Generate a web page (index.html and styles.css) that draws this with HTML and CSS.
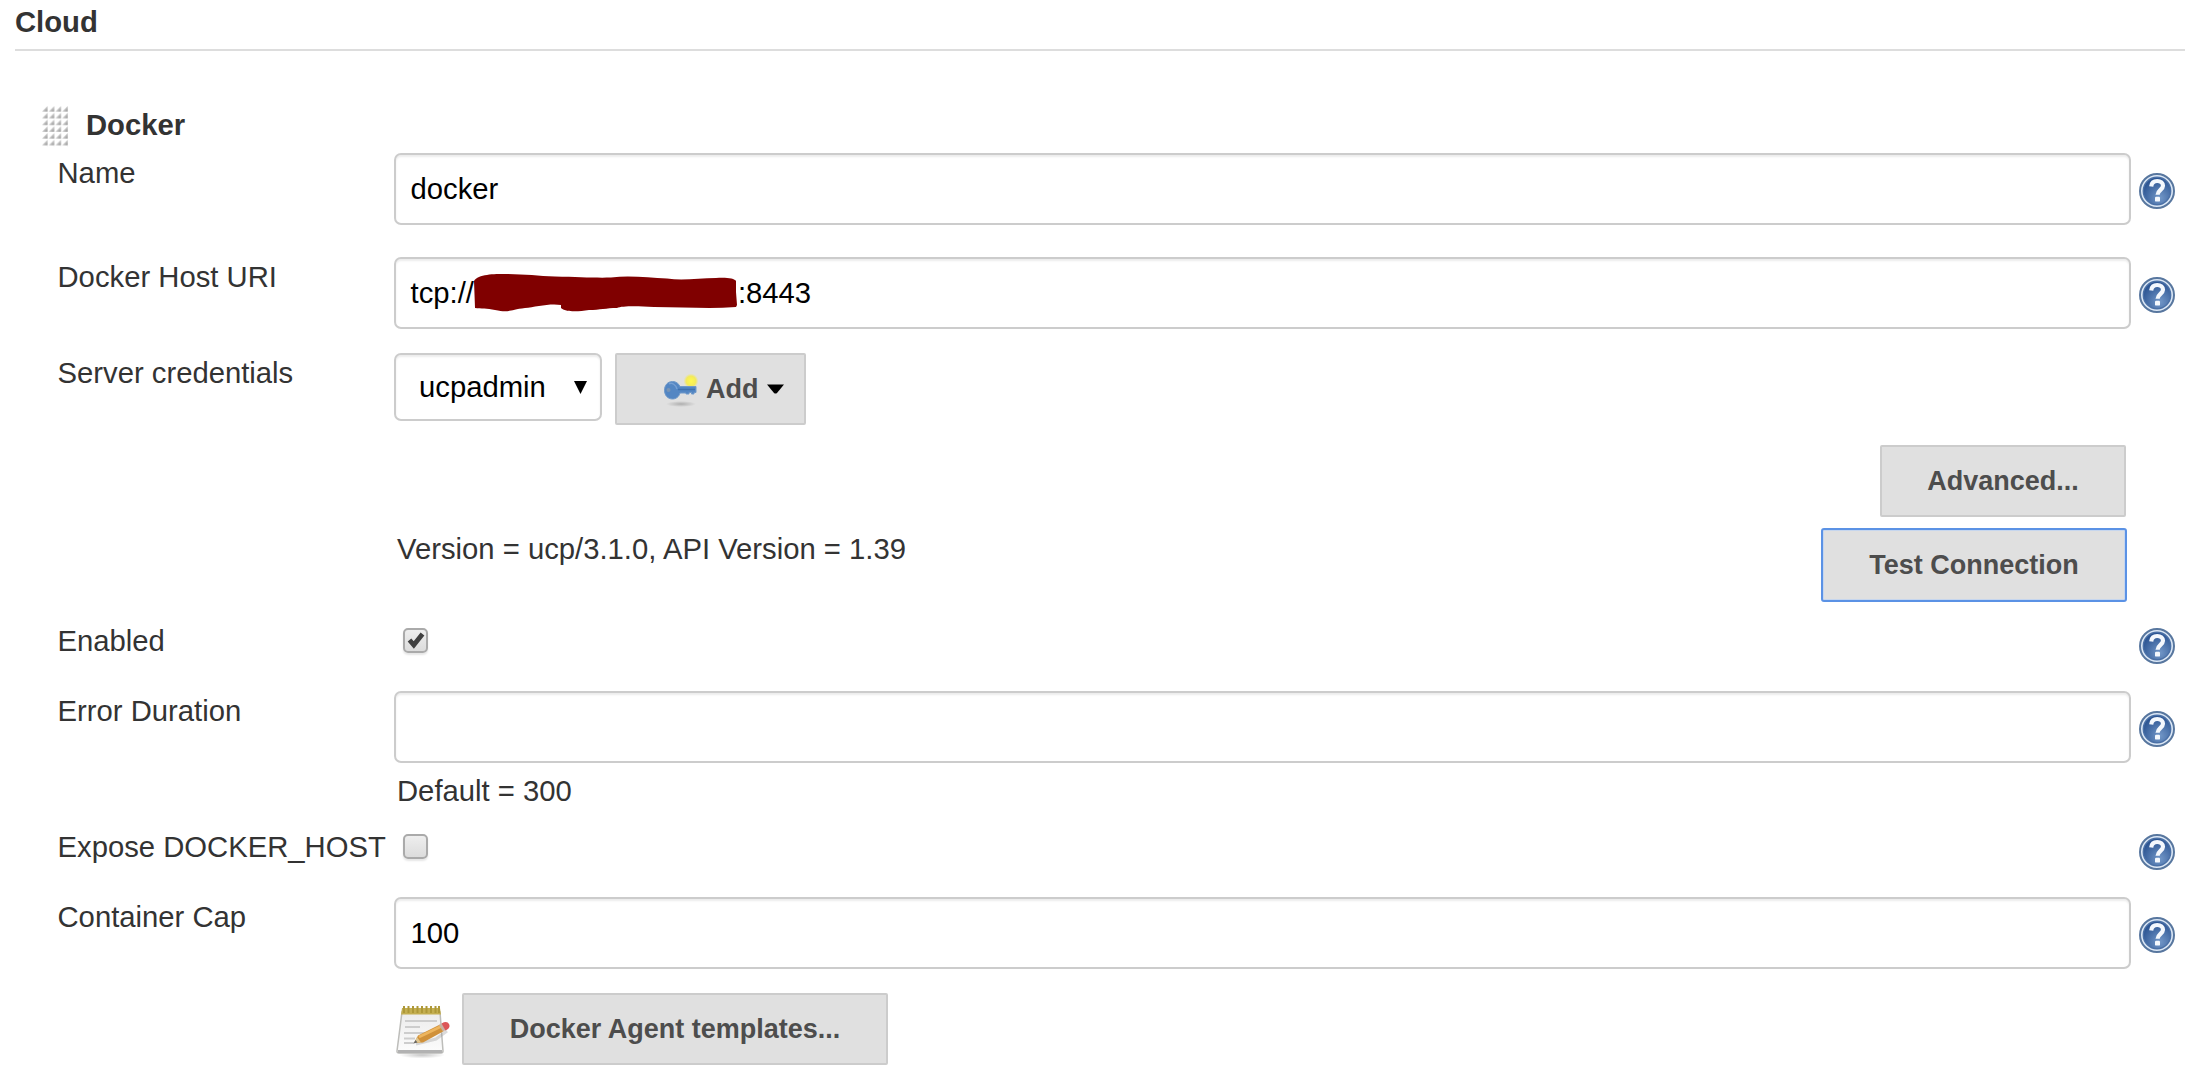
FILE: index.html
```html
<!DOCTYPE html>
<html lang="en">
<head>
<meta charset="utf-8">
<title>Cloud</title>
<link rel="stylesheet" href="styles.css">
</head>
<body>
<svg class="defs" width="0" height="0" aria-hidden="true">
  <defs>
    <radialGradient id="disc" cx="60%" cy="75%" r="75%"><stop offset="0" stop-color="#7398c8"/><stop offset="1" stop-color="#27508f"/></radialGradient>
    <linearGradient id="dot" x1="0" y1="0" x2="1" y2="1"><stop offset=".25" stop-color="#e8e8e8"/><stop offset="1" stop-color="#8e8e8e"/></linearGradient>
    <linearGradient id="paper" x1="0" y1="0" x2="0" y2="1"><stop offset="0" stop-color="#ececec"/><stop offset="1" stop-color="#fcfcfc"/></linearGradient>
    <radialGradient id="glow"><stop offset="0" stop-color="#fff94f"/><stop offset=".65" stop-color="#f3ea5c"/><stop offset="1" stop-color="#eee87a" stop-opacity="0"/></radialGradient>
    <radialGradient id="shade"><stop offset="0" stop-color="#000" stop-opacity=".22"/><stop offset="1" stop-color="#000" stop-opacity="0"/></radialGradient>
    <pattern id="grip" width="6.75" height="6.75" patternUnits="userSpaceOnUse"><path d="M5.500 0V5.500H0Z" fill="url(#dot)"/></pattern>
    <symbol id="help" viewBox="0 0 36 36">
      <circle cx="18" cy="18" r="17" fill="#dce8f6" stroke="#58779f" stroke-width="2"/>
      <circle cx="18" cy="18" r="13.7" fill="url(#disc)" stroke="#4a70a6" stroke-width="1.4"/>
      <path d="M12.2 13.4C12.600 10 15 8 18.2 8C21.800 8 24 10 24 12.800C24 16.600 18.600 17.2 18.600 21.8" fill="none" stroke="#f4f8fd" stroke-width="4.2"/>
      <rect x="16" y="23.8" width="5" height="4.800" rx="1.2" fill="#f4f8fd"/>
    </symbol>
  </defs>
</svg>
<main class="page">
  <h1 class="section-title">Cloud</h1>
  <header class="cloud-head">
    <svg class="grip" viewBox="0 0 27 41"><rect width="27" height="40.5" fill="url(#grip)"/></svg>
    <h2 class="cloud-name">Docker</h2>
  </header>

  <section class="row row-name">
    <div class="label">Name</div>
    <div class="content"><div class="field">docker</div></div>
    <svg class="help"><use href="#help"/></svg>
  </section>
  <section class="row row-uri">
    <div class="label">Docker Host URI</div>
    <div class="content"><div class="field"><span class="scheme">tcp://</span><svg class="redaction" viewBox="0 0 264 38"><path d="M0 7C4 0 20 0 32 0C50 0 64 2 81 2.5C105 3 122 4 137 3.5C157 1 175 4 193 4.5C209 7 225 4 242 4C250 3 261 4 262 7V18L263 31L262 33C235 35 210 33 180 33C162 32 148 32 143 34C132 34 126 36 115 36C103 38 91 38 87 34V31C76 29 61 33 51 34C35 36 35 39 21 36C13 34 7 35 1 34Z" fill="#800000"/></svg><span>:8443</span></div></div>
    <svg class="help"><use href="#help"/></svg>
  </section>
  <section class="row row-credentials">
    <div class="label">Server credentials</div>
    <div class="content controls">
      <div class="select"><span>ucpadmin</span><svg class="select-arrow" viewBox="0 0 13 13"><path d="M0 0H13L6.5 13Z"/></svg></div>
      <div class="button add">
        <svg class="key" viewBox="0 0 36 34">
          <ellipse cx="18" cy="30" rx="15" ry="3" fill="url(#shade)"/>
          <circle cx="28" cy="7" r="7.5" fill="url(#glow)"/>
          <path d="M9.5 7.5C13 7.5 15.8 9.6 17 12.5H33V18.5H31V20H28.5V18.5H26V20H23V19H17C16 22.8 13 25 9.5 25C4.5 25 1.5 21 1.5 16.2C1.5 11.5 4.5 7.5 9.5 7.5Z" fill="#5386c3" stroke="#7099c9"/>
          <path d="M15 15.5H32" stroke="#3f70ae" stroke-width="1.5"/>
          <circle cx="5.5" cy="16" r="2" fill="#7894b5"/>
          <path d="M6 10C9 8 13 11 14 15" fill="none" stroke="#769fd3" stroke-width="1.5"/>
        </svg>
        <span>Add</span>
        <svg class="caret" viewBox="0 0 17 10"><path d="M0 0.5H17L10 9Q8.5 10 7 9Z"/></svg>
      </div>
    </div>
  </section>
  <section class="row row-advanced">
    <div class="actions"><div class="button advanced">Advanced...</div></div>
  </section>
  <section class="row row-test">
    <div class="content message">Version = ucp/3.1.0, API Version = 1.39</div>
    <div class="actions"><div class="button test">Test Connection</div></div>
  </section>
  <section class="row row-check">
    <div class="label">Enabled</div>
    <div class="content"><div class="checkbox"><svg class="tick" viewBox="0 0 18 18"><path d="M2.5 9L6.8 14L15.5 3" fill="none" stroke="#404040" stroke-width="4.8"/></svg></div></div>
    <svg class="help"><use href="#help"/></svg>
  </section>
  <section class="row row-error">
    <div class="label">Error Duration</div>
    <div class="content"><div class="field"></div><div class="hint">Default = 300</div></div>
    <svg class="help"><use href="#help"/></svg>
  </section>
  <section class="row row-check">
    <div class="label">Expose DOCKER_HOST</div>
    <div class="content"><div class="checkbox"></div></div>
    <svg class="help"><use href="#help"/></svg>
  </section>
  <section class="row row-cap">
    <div class="label">Container Cap</div>
    <div class="content"><div class="field">100</div></div>
    <svg class="help"><use href="#help"/></svg>
  </section>
  <section class="row row-templates">
    <div class="content controls">
      <svg class="notepad" viewBox="0 0 54 54">
        <ellipse cx="26" cy="49" rx="23" ry="3.5" fill="url(#shade)"/>
        <path d="M6 6H44L47 45Q47 47 45 47H3Q.8 47 1 45Z" fill="url(#paper)" stroke="#bdbdba" stroke-width="1.5"/>
        <path d="M2 44H46V47H2Z" fill="#b2b2b2"/>
        <path d="M6 2H44L45 8.500H5Z" fill="#c3ae50"/>
        <path d="M8 0V7M12.5 0V7M17 0V7M21.5 0V7M26 0V7M30.5 0V7M35 0V7M39.5 0V7M43 0V7" stroke="#ad9838" stroke-width="2"/>
        <path d="M9 15H41M9 21H24M8 27H30M8 32.5H19M8 37H18" stroke="#cdcdcd" stroke-width="1.8"/>
        <path d="M20 38L40 33L51 25" fill="none" stroke="#999" stroke-opacity=".35" stroke-width="3"/>
        <path d="M18 37L22 29.500L44 18.500L48 25L27 36.500Z" fill="#d0913a"/>
        <path d="M23 31L45 20.5" stroke="#edb55e" stroke-width="2.500"/>
        <path d="M18 37L21 31L25 36.500Z" fill="#dfc58e"/><path d="M17.5 37.5L19.5 34L21.5 36.5Z" fill="#666"/>
        <path d="M43 19L46 17.500L50 24L47 25.5Z" fill="#c7b0a2"/>
        <path d="M45.500 17.500Q51 14.500 53 18Q55 22 49.500 24.500Z" fill="#dc5557"/>
      </svg>
      <div class="button templates">Docker Agent templates...</div>
    </div>
  </section>
</main>
</body>
</html>
```
FILE: styles.css
```css
* { box-sizing: border-box; }
body {
  margin: 0;
  background: #fff;
  color: #333;
  font: 29.25px/34px "Liberation Sans", Arial, sans-serif;
}
.defs { display: block; height: 0; }
svg { display: block; flex: none; }
.page { height: 1073px; overflow: hidden; }
.section-title {
  height: 51px;
  margin: 0 0 0 15px;
  padding-top: 5px;
  border-bottom: 2px solid #ddd;
  font-size: 29.25px;
}
.cloud-head { display: flex; height: 102px; padding: 55px 0 0 42px; }
.grip { width: 27px; height: 41px; }
.cloud-name { margin: 2px 0 0 17px; font-size: 29.25px; }
.row {
  display: grid;
  grid-template-columns: 337px 1737px 36px;
  column-gap: 0;
  align-items: start;
  padding-left: 57px;
}
.row-name { height: 104px; }
.row-uri, .row-cap { height: 96px; }
.row-credentials { height: 92px; }
.row-advanced { height: 83px; }
.row-test { height: 100px; }
.row-check { height: 63px; }
.row-error { height: 143px; }
.row-templates { height: 80px; }
.label { margin-top: 3px; padding-left: .5px; white-space: nowrap; }
.row-check .label { margin-top: -4px; }
.content { grid-column: 2; grid-row: 1; }
.help { grid-column: 3; width: 36px; height: 36px; margin: 20px 0 0 8px; }
.row-check .help { margin-top: 0; }
.field {
  display: flex;
  align-items: center;
  height: 72px;
  padding: 0 14.5px;
  border: 2px solid #ccc;
  border-radius: 7px;
  box-shadow: inset 0 2px 2px rgba(0, 0, 0, .075);
  background: #fff;
  color: #000;
}
.redaction { width: 264px; height: 38px; margin: 0 -.5px 0 .5px; }
.controls { display: flex; align-items: flex-start; }
.select {
  display: flex;
  align-items: center;
  justify-content: space-between;
  width: 208px;
  height: 68px;
  padding: 0 13px 0 23px;
  border: 2px solid #ccc;
  border-radius: 7px;
  box-shadow: inset 0 2px 2px rgba(0, 0, 0, .075);
  color: #000;
}
.select-arrow { width: 13px; height: 13px; }
.button {
  display: flex;
  align-items: center;
  justify-content: center;
  height: 72px;
  border: 2px solid #ccc;
  border-radius: 2px;
  background: #e0e0e0;
  color: #4d4d4d;
  font-size: 27px;
  font-weight: bold;
  white-space: nowrap;
}
.add { justify-content: flex-start; width: 191px; margin-left: 13px; padding-left: 46px; }
.key { width: 36px; height: 34px; margin: 4px 7px 0 0; }
.caret { width: 17px; height: 10px; margin-left: 9px; }
.actions { grid-column: 2; grid-row: 1; display: flex; justify-content: flex-end; padding-right: 5px; }
.row-test .actions { padding-right: 4px; }
.advanced { width: 246px; }
.test { width: 306px; height: 74px; border-color: #5b92e5; border-radius: 3px; box-shadow: inset 0 0 0 1px #c6d6ee; }
.message { padding: 4px 0 0 3px; }
.hint { padding: 11px 0 0 3px; }
.checkbox {
  width: 25px;
  height: 25px;
  margin-left: 9px;
  padding: 1px 2px;
  border: 2px solid #aaa;
  border-radius: 5px;
  background: linear-gradient(#eee, #dcdcdc);
  box-shadow: 0 2px 2px rgba(0, 0, 0, .1);
}
.tick { width: 18px; height: 18px; }
.notepad { width: 54px; height: 54px; margin: 13px 12px 0 2px; }
.templates { width: 426px; }
```
